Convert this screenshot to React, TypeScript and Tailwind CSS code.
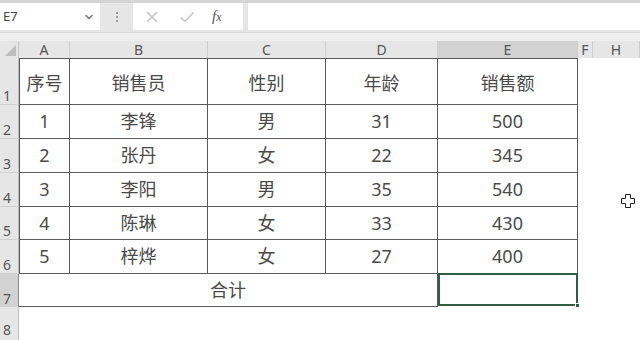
import { ChevronDown } from 'lucide-react'

const cols = ['A', 'B', 'C', 'D', 'E', 'F', 'H']

const rows = [
  ['序号', '销售员', '性别', '年龄', '销售额'],
  ['1', '李锋', '男', '31', '500'],
  ['2', '张丹', '女', '22', '345'],
  ['3', '李阳', '男', '35', '540'],
  ['4', '陈琳', '女', '33', '430'],
  ['5', '梓烨', '女', '27', '400'],
]

const rowHeights = ['h-[47px]', 'h-[34px]', 'h-[34px]', 'h-[34px]', 'h-[33px]', 'h-[34px]']

const font = { fontFamily: '"Noto Sans", "Noto Sans CJK SC", sans-serif' }

export default function App() {
  return (
    <div className="w-[640px] h-[340px] overflow-hidden bg-white relative select-none" style={font}>
      {/* Formula bar */}
      <div className="h-[32px] bg-[#e6e6e6] border-t-[3px] border-[#d4d4d4] flex items-stretch pb-[2px]">
        <div className="w-[100px] bg-white flex items-center justify-between pl-[3px] pr-[5px] text-[13px] text-[#444]">
          <span>E7</span>
          <ChevronDown className="w-3 h-3 text-[#777]" strokeWidth={3} />
        </div>
        <div className="w-[33px] flex flex-col items-center justify-center gap-[2px]">
          <span className="w-[2px] h-[2px] bg-[#9a9a9a]" />
          <span className="w-[2px] h-[2px] bg-[#9a9a9a]" />
          <span className="w-[2px] h-[2px] bg-[#9a9a9a]" />
        </div>
        <div className="w-[110px] bg-white flex items-center">
          <svg className="ml-[12px]" width="14" height="14" viewBox="0 0 14 14">
            <path d="M2 2 L12 12 M12 2 L2 12" stroke="#c4c4c4" strokeWidth="1.6" fill="none" />
          </svg>
          <svg className="ml-[20px]" width="16" height="14" viewBox="0 0 16 14">
            <path d="M1.5 7.5 L6 11.5 L14.5 2.5" stroke="#c4c4c4" strokeWidth="1.6" fill="none" />
          </svg>
          <span
            className="ml-[17px] text-[15px] italic text-[#555]"
            style={{ fontFamily: '"Liberation Serif", serif' }}
          >
            f<span className="text-[12px]">x</span>
          </span>
        </div>
        <div className="w-[5px]" />
        <div className="flex-1 bg-white" />
      </div>

      <div className="h-[9px] bg-[#efefef] border-t border-[#d9d9d9]" />

      {/* Sheet */}
      <div className="grid grid-cols-[19px_51px_138px_118px_112px_140px_15px_47px] text-[#4a4a4a]">
        {/* header row */}
        <div className="h-[17px] bg-[#e6e6e6] border-r border-[#c8c8c8] relative">
          <div className="absolute right-[2px] bottom-[2px] w-0 h-0 border-l-[11px] border-l-transparent border-b-[11px] border-b-[#bdbdbd]" />
        </div>
        {cols.map((c) => (
          <div
            key={c}
            className={`h-[17px] flex items-center justify-center text-[14px] text-[#555] border-r border-[#cfcfcf] ${
              c === 'E' ? 'bg-[#d2d2d2]' : 'bg-[#e6e6e6]'
            }`}
          >
            {c}
          </div>
        ))}

        {/* data rows */}
        {rows.map((r, i) => (
          <div key={i} className="contents">
            <div
              className={`${rowHeights[i]} bg-[#e6e6e6] border-r border-[#bdbdbd] border-b border-b-[#d0d0d0] flex items-end pl-[3px] pb-[1px] text-[14px] text-[#555] leading-none`}
            >
              {i + 1}
            </div>
            {r.map((v, j) => (
              <div
                key={j}
                className={`${rowHeights[i]} flex items-center justify-center text-[18px] border-r border-b border-[#5b5b5b] ${
                  i === 0 ? 'border-t pt-[3px]' : ''
                } ${j === 0 ? 'border-l' : ''}`}
              >
                {v}
              </div>
            ))}
            <div className={rowHeights[i]} />
            <div className={rowHeights[i]} />
          </div>
        ))}

        {/* total row */}
        <div className="h-[33px] bg-[#d2d2d2] border-r border-[#8a8a8a] flex items-end pl-[3px] pb-[1px] text-[14px] text-[#555] leading-none">
          7
        </div>
        <div className="col-span-4 h-[33px] border-b border-r border-[#5b5b5b] flex items-center justify-center text-[18px]">
          合计
        </div>
        <div className="h-[33px] relative border-2 border-[#2f5e45] -mt-[1px]">
          <div className="absolute -right-[4px] -bottom-[4px] w-[5px] h-[5px] bg-[#2f5e45] border border-white" />
        </div>
        <div className="h-[33px]" />
        <div className="h-[33px]" />

        {/* row 8 */}
        <div className="h-[40px] bg-[#e6e6e6] border-r border-[#bdbdbd] flex items-start pt-[16px] pl-[3px] text-[14px] text-[#555] leading-none">
          8
        </div>
        <div className="col-span-7 h-[40px]" />
      </div>

      {/* cell cursor */}
      <svg className="absolute left-[621px] top-[194px]" width="14" height="14" viewBox="0 0 14 14">
        <path
          d="M4.5 0.5 H9.5 V4.5 H13.5 V9.5 H9.5 V13.5 H4.5 V9.5 H0.5 V4.5 H4.5 Z"
          fill="white"
          stroke="#222"
          strokeWidth="1"
        />
      </svg>
    </div>
  )
}
